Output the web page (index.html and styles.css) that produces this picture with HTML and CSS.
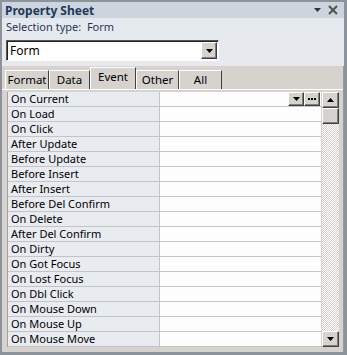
FILE: index.html
```html
<!DOCTYPE html>
<html>
<head>
<meta charset="utf-8">
<link rel="stylesheet" href="styles.css">
</head>
<body>
<div class="window">
  <div class="titlebar">
    <span class="title">Property Sheet</span>
    <span class="title-icons">
      <svg width="9" height="5" viewBox="0 0 9 5"><path d="M1 0h7l-3.5 4z" fill="#333"/></svg>
      <svg width="10" height="10" viewBox="0 0 10 10"><path d="M1 1l8 8M9 1l-8 8" stroke="#555" stroke-width="2.2"/></svg>
    </span>
  </div>
  <div class="seltype">Selection type:&nbsp;&nbsp;Form</div>
  <div class="combo">
    <span class="combo-text">Form</span>
    <span class="btn combo-btn"><svg width="7" height="4" viewBox="0 0 7 4"><path d="M0 0h7l-3.5 4z" fill="#000"/></svg></span>
  </div>
  <div class="tabarea">
    <div class="tabs">
      <span class="tab t1">Format</span>
      <span class="tab t2">Data</span>
      <span class="tab active">Event</span>
      <span class="tab t4">Other</span>
      <span class="tab t5">All</span>
    </div>
    <div class="gridwrap">
      <div class="grid">
        <div class="row first"><span class="lbl">On Current</span><span class="val"><span class="btn small"><svg width="7" height="4" viewBox="0 0 7 4"><path d="M0 0h7l-3.5 4z" fill="#000"/></svg></span><span class="btn small"><svg width="8" height="2" viewBox="0 0 8 2"><path d="M0 0h2v2h-2zM3 0h2v2h-2zM6 0h2v2h-2z" fill="#000"/></svg></span></span></div>
        <div class="row"><span class="lbl">On Load</span><span class="val"></span></div>
        <div class="row"><span class="lbl">On Click</span><span class="val"></span></div>
        <div class="row"><span class="lbl">After Update</span><span class="val"></span></div>
        <div class="row"><span class="lbl">Before Update</span><span class="val"></span></div>
        <div class="row"><span class="lbl">Before Insert</span><span class="val"></span></div>
        <div class="row"><span class="lbl">After Insert</span><span class="val"></span></div>
        <div class="row"><span class="lbl">Before Del Confirm</span><span class="val"></span></div>
        <div class="row"><span class="lbl">On Delete</span><span class="val"></span></div>
        <div class="row"><span class="lbl">After Del Confirm</span><span class="val"></span></div>
        <div class="row"><span class="lbl">On Dirty</span><span class="val"></span></div>
        <div class="row"><span class="lbl">On Got Focus</span><span class="val"></span></div>
        <div class="row"><span class="lbl">On Lost Focus</span><span class="val"></span></div>
        <div class="row"><span class="lbl">On Dbl Click</span><span class="val"></span></div>
        <div class="row"><span class="lbl">On Mouse Down</span><span class="val"></span></div>
        <div class="row"><span class="lbl">On Mouse Up</span><span class="val"></span></div>
        <div class="row"><span class="lbl">On Mouse Move</span><span class="val"></span></div>
      </div>
      <div class="scrollbar">
        <span class="btn sbtn"><svg width="7" height="4" viewBox="0 0 7 4"><path d="M3.5 0l3.5 4h-7z" fill="#000"/></svg></span>
        <span class="btn thumb"></span>
        <span class="track"></span>
        <span class="btn sbtn"><svg width="7" height="4" viewBox="0 0 7 4"><path d="M0 0h7l-3.5 4z" fill="#000"/></svg></span>
      </div>
    </div>
  </div>
</div>
</body>
</html>
```
FILE: styles.css
```css
html, body { margin: 0; padding: 0; }
body { width: 347px; height: 355px; font-family: "Noto Sans", "DejaVu Sans", sans-serif; font-size: 11px; color: #000; }
.window {
  width: 347px; height: 355px; box-sizing: border-box;
  border: 2px solid #8d939a; border-right-width: 3px; border-bottom-width: 3px;
  background: #e6e9ee; display: flex; flex-direction: column;
}
.titlebar {
  height: 16px; background: #ccd4dd; display: flex; align-items: center; justify-content: space-between;
  padding: 0 6px 0 3px;
}
.title { font-weight: bold; font-size: 12px; color: #1e395b; }
.title-icons { display: flex; align-items: center; gap: 6px; }
.seltype { height: 20px; line-height: 18px; padding-left: 4px; color: #1e395b; font-size: 11px; }
.combo {
  margin: 2px 0 0 4px; width: 213px; height: 21px; box-sizing: border-box;
  border: 1px solid; border-color: #555 #fff #fff #555; background: #fff;
  display: flex; align-items: center; justify-content: space-between; padding: 0 1px 0 3px;
  box-shadow: inset 1px 1px 0 #222;
}
.combo-text { font-size: 12px; }
.btn {
  background: #d6d3ce; box-sizing: border-box; display: flex; align-items: center; justify-content: center;
  border: 1px solid; border-color: #fff #404040 #404040 #fff; box-shadow: inset -1px -1px 0 #808080;
}
.combo-btn { width: 16px; height: 17px; }
.tabarea { margin-top: 5px; flex: 1; background: #d6d3ce; display: flex; flex-direction: column; border-right: 1px solid #9a9a9a; }
.tabs { display: flex; height: 23px; align-items: flex-end; padding-left: 3px; }
.tab {
  height: 19px; box-sizing: border-box; border: 1px solid; border-color: #fff #404040 transparent #fff;
  padding: 0; font-size: 11.5px; line-height: 17px; border-bottom: 0; text-align: center; white-space: nowrap;
}
.t1 { width: 44px; }
.t2 { width: 41px; }
.tab.active { height: 22px; width: 46px; line-height: 18px; }
.t4 { width: 43px; }
.t5 { width: 43px; }
.gridwrap { display: flex; padding: 2px 0 0 5px; border-top: 1px solid #fff; }
.grid { width: 313px; border-left: 1px solid #a0a0a0; background: #fff; }
.row { display: flex; height: 15px; border-bottom: 1px solid #c4c4c4; box-sizing: border-box; }
.lbl { width: 152px; background: #e8ebf0; border-right: 1px solid #c4c4c4; padding-left: 3px; line-height: 14px; box-sizing: border-box; }
.val { flex: 1; display: flex; justify-content: flex-end; align-items: stretch; background: #fdfdfe; padding-right: 1px; }
.btn.small { width: 16px; height: 14px; }
.scrollbar { width: 18px; display: flex; flex-direction: column; margin-left: 1px; }
.sbtn { width: 17px; height: 16px; }
.thumb { width: 17px; height: 16px; }
.track {
  flex: 1; width: 17px;
  background-color: #fff;
  background-image: repeating-conic-gradient(#d6d3ce 0 25%, #fff 0 50%);
  background-size: 2px 2px;
}
```
